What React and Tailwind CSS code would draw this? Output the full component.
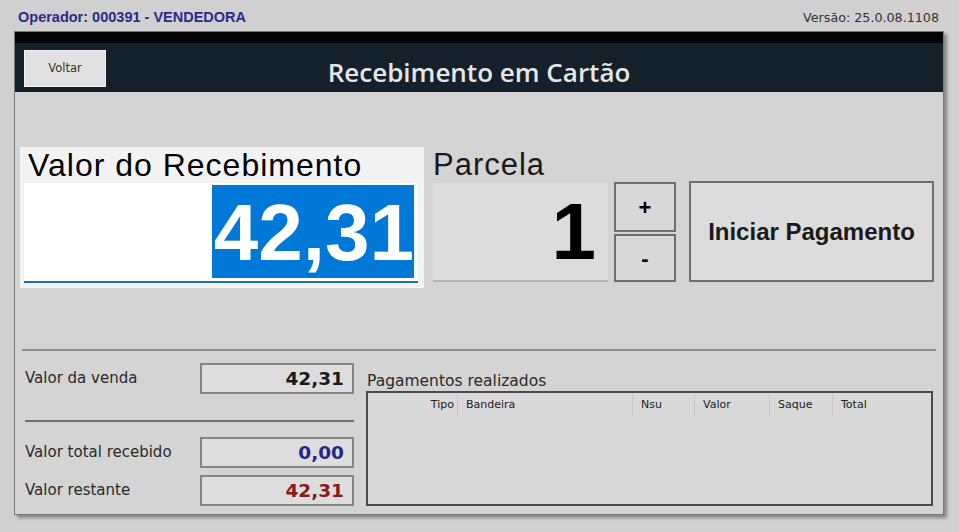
import React from 'react';

const tahoma = "font-['DejaVu_Sans',sans-serif]";
const arial = "font-['Liberation_Sans',Arial,sans-serif]";

function ValueRow({ label, value, color, className }) {
  return (
    <div className={`flex items-center justify-between h-[31px] ${className}`}>
      <span className={`${tahoma} text-[15px] text-[#2a2a2a]`}>{label}</span>
      <div className="w-[154px] h-[31px] border-2 border-[#858585] bg-[#dddddd] flex items-center justify-end pr-[8px]">
        <span className={`${tahoma} font-bold text-[18.5px] ${color}`}>{value}</span>
      </div>
    </div>
  );
}

export default function App() {
  const cols = [
    { label: 'Tipo', w: 'w-[89px]', align: 'justify-end pr-[3px]' },
    { label: 'Bandeira', w: 'w-[175px]', align: 'pl-[8px] border-l border-[#c6c6c6]' },
    { label: 'Nsu', w: 'w-[62px]', align: 'pl-[8px] border-l border-[#c6c6c6]' },
    { label: 'Valor', w: 'w-[75px]', align: 'pl-[8px] border-l border-[#c6c6c6]' },
    { label: 'Saque', w: 'w-[63px]', align: 'pl-[8px] border-l border-[#c6c6c6]' },
    { label: 'Total', w: 'w-[70px]', align: 'pl-[8px] border-l border-[#c6c6c6]' },
  ];

  return (
    <div className="w-[959px] h-[532px] bg-[#d0d0d0] overflow-hidden">
      {/* Top info line */}
      <div className="h-[31px] flex items-center justify-between pl-[18px] pr-[20px] pt-[5px]">
        <span className={`${arial} font-bold text-[14.5px] text-[#2b2b8c]`}>Operador: 000391 - VENDEDORA</span>
        <span className={`${tahoma} text-[12.7px] text-[#333333]`}>Versão: 25.0.08.1108</span>
      </div>

      {/* Main panel */}
      <div className="ml-[14px] w-[930px] h-[484px] border border-[#7a7a7a] bg-[#d4d4d4] shadow-[3px_3px_3px_rgba(0,0,0,0.35)] flex flex-col">
        <div className="h-[11px] bg-[#050505]" />
        <div className="h-[49px] bg-[#14212b] grid grid-cols-[1fr_auto_1fr] items-start">
          <button className={`${tahoma} mt-[7px] ml-[9px] w-[82px] h-[37px] bg-[#e1e1e1] border border-[#f2f2f2] text-[11.5px] text-[#333333] pt-[1px]`}>
            Voltar
          </button>
          <h1 className="font-['Open_Sans',sans-serif] font-semibold text-[26px] leading-[49px] pt-[5px] text-[#e6e6e6]">
            Recebimento em Cartão
          </h1>
          <div />
        </div>

        {/* Entry row */}
        <div className="flex items-start pl-[5px] pt-[55px]">
          <div className="w-[404px] h-[141px] bg-[#f3f3f3] flex flex-col">
            <div className={`${arial} h-[36px] pl-[8px] text-[32px] leading-[36px] tracking-[1px] text-black`}>
              Valor do Recebimento
            </div>
            <div className="ml-[4px] w-[394px] h-[100px] bg-white border-b-2 border-[#1a6fc4] flex justify-end items-start pt-[2px] pr-[4px]">
              <div className={`${arial} w-[202px] h-[93px] bg-[#0078d7] text-white font-bold text-[80px] leading-[95px] text-right`}>
                42,31
              </div>
            </div>
          </div>

          <div className="ml-[9px] w-[175px] flex flex-col">
            <div className={`${arial} h-[36px] text-[31px] leading-[36px] tracking-[1px] text-[#1a1a1a]`}>Parcela</div>
            <div className="h-[99px] bg-[#dcdcdc] border-b-2 border-[#b4b4b4] flex items-center justify-end pr-[12px]">
              <span className={`${arial} font-bold text-[80px] leading-none text-black`}>1</span>
            </div>
          </div>

          <div className="ml-[6px] w-[62px] pt-[35px] flex flex-col gap-[2px]">
            <button className={`${arial} h-[50px] border-2 border-[#6e6e6e] bg-[#d8d8d8] font-bold text-[22px] text-black`}>+</button>
            <button className={`${arial} h-[48px] border-2 border-[#6e6e6e] bg-[#d8d8d8] font-bold text-[22px] text-black`}>-</button>
          </div>

          <button className={`${arial} ml-[13px] mt-[34px] w-[245px] h-[101px] border-2 border-[#6e6e6e] bg-[#dcdcdc] font-bold text-[24px] text-[#1a1a1a]`}>
            Iniciar Pagamento
          </button>
        </div>

        <div className="mt-[61px] mx-[7px] h-[2px] bg-[#8f8f8f]" />

        {/* Totals and payments */}
        <div className="flex items-start pl-[10px]">
          <div className="w-[329px] pt-[12px] flex flex-col">
            <ValueRow label="Valor da venda" value="42,31" color="text-[#1a1a1a]" />
            <div className="mt-[26px] h-[2px] bg-[#707070]" />
            <ValueRow label="Valor total recebido" value="0,00" color="text-[#23268a]" className="mt-[15px]" />
            <ValueRow label="Valor restante" value="42,31" color="text-[#8b1a1a]" className="mt-[7px]" />
          </div>

          <div className="ml-[12px] w-[567px] pt-[20px] flex flex-col">
            <div className={`${tahoma} h-[20px] leading-[20px] pl-[1px] text-[15.5px] text-[#2a2a2a]`}>Pagamentos realizados</div>
            <div className="h-[115px] border-2 border-[#4a4a4a] bg-[#d9d9d9]">
              <div className="flex h-[22px] mt-[1px]">
                {cols.map((c) => (
                  <div key={c.label} className={`${c.w} ${c.align} flex items-center ${tahoma} text-[11px] text-[#222222]`}>
                    {c.label}
                  </div>
                ))}
              </div>
            </div>
          </div>
        </div>
      </div>
    </div>
  );
}
